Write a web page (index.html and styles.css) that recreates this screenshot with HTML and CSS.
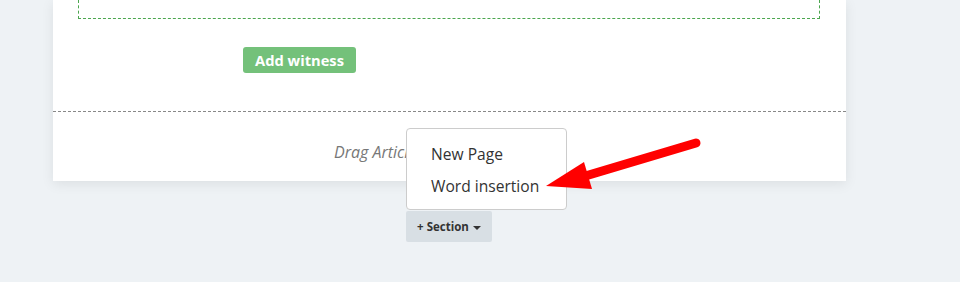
FILE: index.html
```html
<!DOCTYPE html>
<html>
<head>
<meta charset="utf-8">
<link rel="stylesheet" href="styles.css">
</head>
<body>
<div class="card">
  <div class="article">
    <div class="dropzone"></div>
    <div class="actions">
      <button class="btn-add">Add witness</button>
    </div>
  </div>
  <div class="footer">
    <span class="hint">Drag Articles here</span>
  </div>
</div>
<div class="section-bar">
  <div class="section-wrap">
    <ul class="menu">
      <li>New Page</li>
      <li>Word insertion</li>
    </ul>
    <button class="btn-section">+ Section <span class="caret"></span></button>
  </div>
</div>
<svg class="arrow" width="960" height="282" viewBox="0 0 960 282">
  <line x1="696" y1="143" x2="582" y2="177" stroke="#ff0000" stroke-width="9" stroke-linecap="round"/>
  <polygon points="546,186 584,162 592,189" fill="#ff0000"/>
</svg>
</body>
</html>
```

FILE: styles.css
```css
* { box-sizing: border-box; }
html, body { margin: 0; padding: 0; }
body {
  background: #eef2f5;
  font-family: "Open Sans", "Liberation Sans", sans-serif;
  width: 960px;
  height: 282px;
  overflow: hidden;
  position: relative;
}
.card {
  margin-left: 53px;
  width: 793px;
  background: #fff;
  box-shadow: 0 3px 12px rgba(0, 0, 0, 0.08);
}
.article {
  padding: 0 26px 0 25px;
  border-bottom: 1px dashed #888;
  height: 112px;
}
.dropzone {
  height: 19px;
  border: 1px dashed #4ca64f;
  border-top: none;
}
.actions {
  padding-left: 165px;
  margin-top: 28px;
}
.btn-add {
  height: 26px;
  width: 113px;
  border: none;
  border-radius: 3px;
  background: #74c17a;
  color: #fff;
  font-family: "Open Sans", "Liberation Sans", sans-serif;
  font-weight: 700;
  font-size: 14.7px;
  padding: 0;
  line-height: 25px;
}
.footer {
  height: 69px;
  padding-left: 281px;
  padding-top: 29px;
}
.hint {
  font-style: italic;
  font-size: 16px;
  color: #777;
  line-height: 22px;
}
.section-bar {
  display: flex;
  justify-content: center;
  margin-top: 30px;
  margin-left: 53px;
  width: 793px;
  padding-right: 1px;
}
.section-wrap {
  position: relative;
}
.menu {
  position: absolute;
  left: 0;
  bottom: 100%;
  margin: 0 0 1px 0;
  width: 161px;
  list-style: none;
  padding: 9px 0 7px 0;
  background: #fff;
  border: 1px solid #ccc;
  border-radius: 4px;
}
.menu li {
  padding-left: 24px;
  font-size: 15.6px;
  line-height: 32px;
  color: #333;
}
.btn-section {
  width: 86px;
  height: 31px;
  border: none;
  border-radius: 2px;
  background: #d8dfe4;
  color: #333;
  font-family: "Open Sans", "Liberation Sans", sans-serif;
  font-weight: 700;
  font-size: 11.5px;
  padding: 0;
}
.caret {
  display: inline-block;
  width: 0;
  height: 0;
  border-left: 4px solid transparent;
  border-right: 4px solid transparent;
  border-top: 4px solid #333;
  vertical-align: middle;
  margin-left: 1px;
}
.arrow {
  position: absolute;
  left: 0;
  top: 0;
  pointer-events: none;
}
```
